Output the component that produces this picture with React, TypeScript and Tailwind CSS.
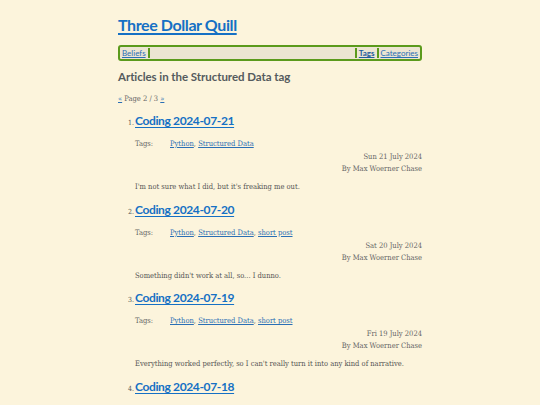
import React from "react";

const head = { fontFamily: 'Lato, "Open Sans", sans-serif' };
const body = { fontFamily: '"DejaVu Serif Condensed", "DejaVu Serif", serif' };

type Art = { n: number; title: string; tags: string[]; date: string; text: string };

const arts: Art[] = [
  { n: 1, title: "Coding 2024-07-21", tags: ["Python", "Structured Data"], date: "Sun 21 July 2024", text: "I'm not sure what I did, but it's freaking me out." },
  { n: 2, title: "Coding 2024-07-20", tags: ["Python", "Structured Data", "short post"], date: "Sat 20 July 2024", text: "Something didn't work at all, so... I dunno." },
  { n: 3, title: "Coding 2024-07-19", tags: ["Python", "Structured Data", "short post"], date: "Fri 19 July 2024", text: "Everything worked perfectly, so I can't really turn it into any kind of narrative." },
  { n: 4, title: "Coding 2024-07-18", tags: ["Python", "Structured Data"], date: "Thu 18 July 2024", text: "" },
];

export default function App() {
  return (
    <div className="h-[405px] w-full bg-[#fcf4dc] overflow-hidden">
      <div className="mx-auto w-[304px] pt-[14px]">
        <h1 style={head} className="text-[16px] leading-[22px] tracking-[-0.025em] font-bold text-[#1570c4] underline decoration-[1.5px] underline-offset-2">
          Three Dollar Quill
        </h1>
        <nav style={head} className="mt-[9px] h-[16px] flex items-center rounded-[3px] border-2 border-[#5b9a1c] bg-[#ece5d2] px-[2px] text-[8px] leading-none">
          <a className="text-[#2a6fb5] underline pr-[1px]">Beliefs</a>
          <span className="w-[2px] h-[10px] bg-[#5b9a1c] ml-[1px]" />
          <span className="flex-1" />
          <span className="w-[2px] h-[10px] bg-[#5b9a1c] mr-[2px]" />
          <a className="text-[#1f5c9c] underline font-bold">Tags</a>
          <span className="w-[2px] h-[10px] bg-[#5b9a1c] mx-[2px]" />
          <a className="text-[#2a6fb5] underline">Categories</a>
        </nav>
        <h2 style={head} className="mt-[8px] text-[11.5px] leading-[16px] tracking-[-0.005em] font-bold text-[#555b5e]">
          Articles in the Structured Data tag
        </h2>
        <div style={body} className="mt-[9px] text-[7.5px] leading-[10px] text-[#666]">
          <a className="text-[#2a6fb5] underline">«</a> Page 2 / 3 <a className="text-[#2a6fb5] underline">»</a>
        </div>
        <ol className="mt-[8px]">
          {arts.map((a) => (
            <li key={a.n} className="flex flex-col h-[88.7px]">
              <div className="flex items-baseline">
                <span style={body} className="w-[17px] text-right pr-[1px] text-[7px] text-[#555]">{a.n}.</span>
                <a style={head} className="text-[12px] leading-[18px] tracking-[-0.03em] font-bold text-[#1570c4] underline decoration-[1px] underline-offset-2">{a.title}</a>
              </div>
              <div className="pl-[17px]" style={body}>
                <div className="mt-[9px] flex text-[7.5px] leading-[10px] text-[#666]">
                  <span className="w-[35px]">Tags:</span>
                  <span>
                    {a.tags.map((t, i) => (
                      <React.Fragment key={t}>
                        <a className="text-[#2a6fb5] underline">{t}</a>
                        {i < a.tags.length - 1 ? ", " : ""}
                      </React.Fragment>
                    ))}
                  </span>
                </div>
                <div className="mt-[2px] text-right text-[7.5px] leading-[12px] text-[#666]">
                  <div>{a.date}</div>
                  <div>By Max Woerner Chase</div>
                </div>
                <p className="mt-[7px] text-[7.5px] leading-[10px] text-[#555]">{a.text}</p>
              </div>
            </li>
          ))}
        </ol>
      </div>
    </div>
  );
}
